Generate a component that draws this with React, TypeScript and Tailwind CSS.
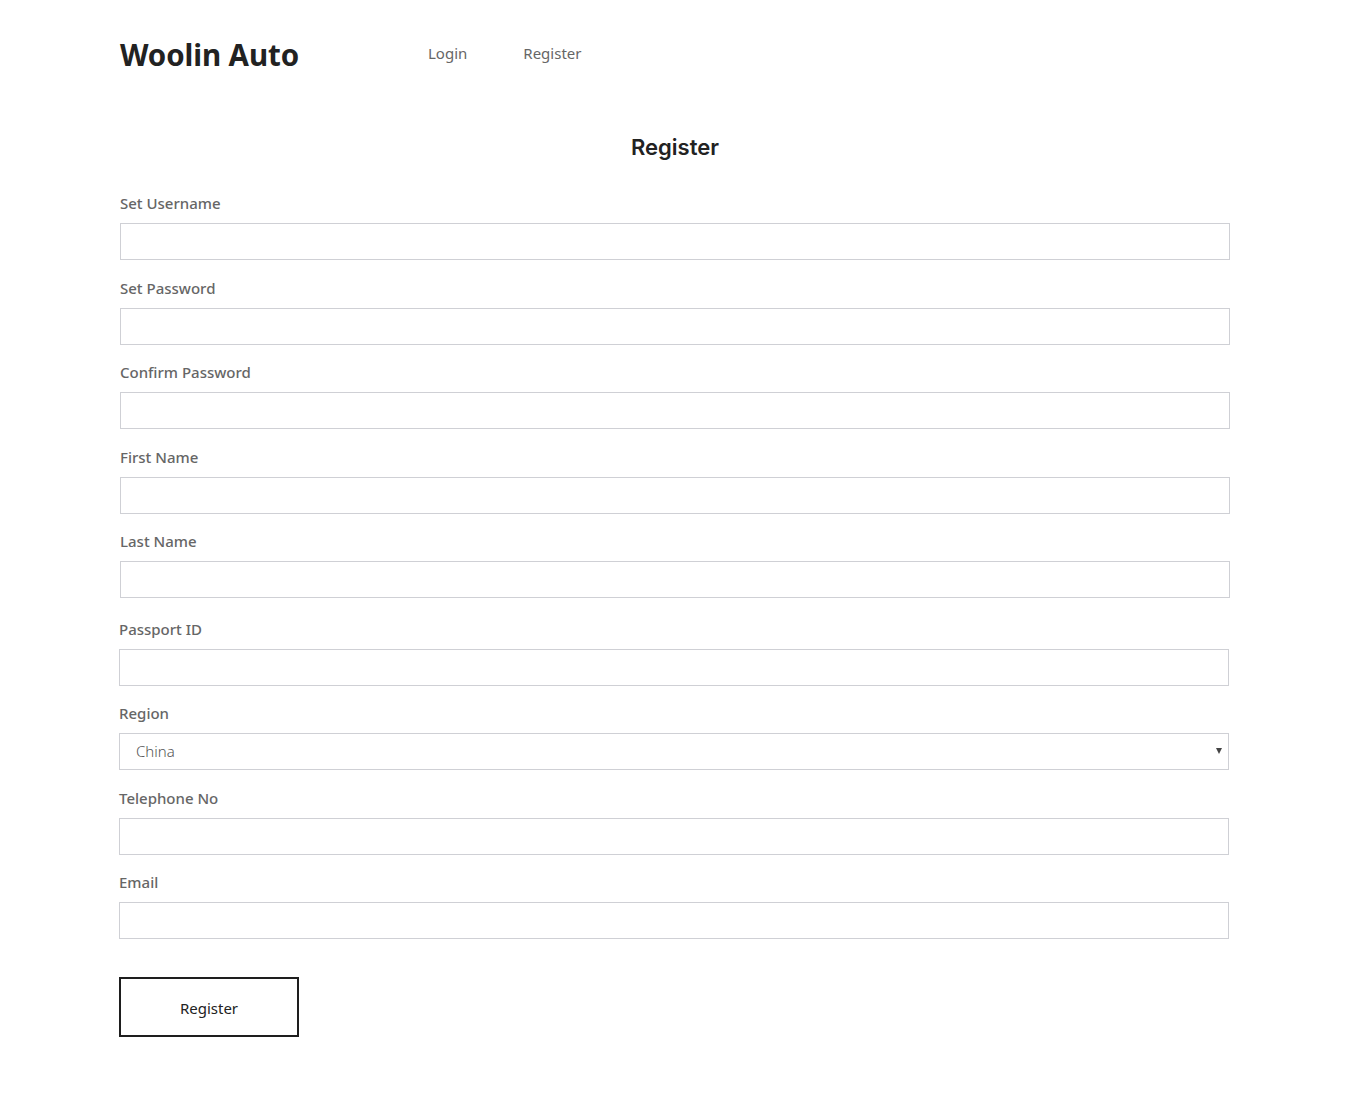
import { useState } from 'react';

type Field = {
    id: string;
    label: string;
    type?: string;
};

const fields: Field[] = [
    { id: 'username', label: 'Set Username' },
    { id: 'password', label: 'Set Password', type: 'password' },
    { id: 'confirm', label: 'Confirm Password', type: 'password' },
    { id: 'firstName', label: 'First Name' },
    { id: 'lastName', label: 'Last Name' },
];

const fields2: Field[] = [
    { id: 'telephone', label: 'Telephone No' },
    { id: 'email', label: 'Email', type: 'email' },
];

const labelCls = "block text-[15px] leading-6 font-medium text-[#666666] mb-2";
const inputCls = "block w-full h-[37px] border border-[#cfd0d5] bg-white px-3 text-[15px] text-[#555] outline-none";

const App = () => {
    const [ region, setRegion ] = useState('China');

    return (
        <div className="min-h-screen bg-white" style={{ fontFamily: '"Noto Sans", "Open Sans", sans-serif' }}>
            <div className="w-[1110px] ml-[120px]">
                <header className="flex items-center h-[108px] pt-[2px]">
                    <a href="#" className="text-[29.5px] font-bold text-[#222] tracking-[-0.1px] w-[308px]">Woolin Auto</a>
                    <nav className="flex gap-[56px] text-[15px] text-[#666] mb-[4px]">
                        <a href="#">Login</a>
                        <a href="#">Register</a>
                    </nav>
                </header>

                <h2 className="text-center text-[22px] font-semibold text-[#222] mt-[23px] mb-[27px]" style={{ fontFamily: 'Inter, "Noto Sans", sans-serif' }}>
                    Register
                </h2>

                <form className="flex flex-col gap-[15.5px]" onSubmit={ e => e.preventDefault() }>
                    {fields.map(f => (
                        <div key={f.id}>
                            <label htmlFor={f.id} className={labelCls}>{f.label}</label>
                            <input id={f.id} type={f.type ?? 'text'} className={inputCls} />
                        </div>
                    ))}

                    <div className="-ml-px mr-px mt-[3px] flex flex-col gap-[15.5px]">
                        <div>
                            <label htmlFor="passport" className={labelCls}>Passport ID</label>
                            <input id="passport" type="text" className={inputCls} />
                        </div>

                        <div>
                            <label htmlFor="region" className={labelCls}>Region</label>
                            <div className="relative">
                                <select
                                    id="region"
                                    value={region}
                                    onChange={ e => setRegion(e.target.value) }
                                    className={`${inputCls} appearance-none pl-4 text-[#555] font-light`}
                                >
                                    <option>China</option>
                                    <option>Hong Kong</option>
                                    <option>Taiwan</option>
                                    <option>Other</option>
                                </select>
                                <span className="pointer-events-none absolute right-[7px] top-[15px] w-0 h-0 border-l-[3.5px] border-r-[3.5px] border-t-[6px] border-l-transparent border-r-transparent border-t-[#444]" />
                            </div>
                        </div>

                        {fields2.map(f => (
                            <div key={f.id}>
                                <label htmlFor={f.id} className={labelCls}>{f.label}</label>
                                <input id={f.id} type={f.type ?? 'text'} className={inputCls} />
                            </div>
                        ))}

                        <div className="mt-[22px]">
                            <button
                                type="submit"
                                className="w-[180px] h-[60px] border-2 border-[#1e1e1e] bg-white text-[15px] text-[#222] pt-[3px]"
                            >
                                Register
                            </button>
                        </div>
                    </div>
                </form>
            </div>
        </div>
    )
}

export default App
